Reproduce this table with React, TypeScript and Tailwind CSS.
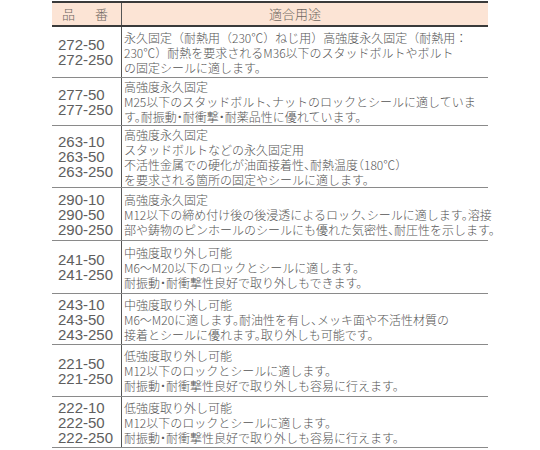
type Row = {
  nums: string[];
  lines: string[];
  h: string;
  fullWidth?: boolean;
};

const rows: Row[] = [
  {
    nums: ['272-50', '272-250'],
    lines: [
      '永久固定（耐熱用（230℃）ねじ用）高強度永久固定（耐熱用：',
      '230℃）耐熱を要求されるM36以下のスタッドボルトやボルト',
      'の固定シールに適します。',
    ],
    h: 'h-[51px]',
    fullWidth: true,
  },
  {
    nums: ['277-50', '277-250'],
    lines: [
      '高強度永久固定',
      'M25以下のスタッドボルト、ナットのロックとシールに適していま',
      'す。耐振動・耐衝撃・耐薬品性に優れています。',
    ],
    h: 'h-[48px]',
  },
  {
    nums: ['263-10', '263-50', '263-250'],
    lines: [
      '高強度永久固定',
      'スタッドボルトなどの永久固定用',
      '不活性金属での硬化が油面接着性、耐熱温度（180℃）',
      'を要求される箇所の固定やシールに適します。',
    ],
    h: 'h-[62px]',
  },
  {
    nums: ['290-10', '290-50', '290-250'],
    lines: [
      '高強度永久固定',
      'M12以下の締め付け後の後浸透によるロック、シールに適します。溶接',
      '部や鋳物のピンホールのシールにも優れた気密性、耐圧性を示します。',
    ],
    h: 'h-[53px]',
  },
  {
    nums: ['241-50', '241-250'],
    lines: [
      '中強度取り外し可能',
      'M6～M20以下のロックとシールに適します。',
      '耐振動・耐衝撃性良好で取り外しもできます。',
    ],
    h: 'h-[53px]',
  },
  {
    nums: ['243-10', '243-50', '243-250'],
    lines: [
      '中強度取り外し可能',
      'M6～M20に適します。耐油性を有し、メッキ面や不活性材質の',
      '接着とシールに優れます。取り外しも可能です。',
    ],
    h: 'h-[51px]',
  },
  {
    nums: ['221-50', '221-250'],
    lines: [
      '低強度取り外し可能',
      'M12以下のロックとシールに適します。',
      '耐振動・耐衝撃性良好で取り外しも容易に行えます。',
    ],
    h: 'h-[52px]',
  },
  {
    nums: ['222-10', '222-50', '222-250'],
    lines: [
      '低強度取り外し可能',
      'M12以下のロックとシールに適します。',
      '耐振動・耐衝撃性良好で取り外しも容易に行えます。',
    ],
    h: 'h-[51px]',
  },
];

const jp = "font-['Noto_Sans_CJK_JP',sans-serif]";

const App = () => {
  return (
    <div className="w-[540px] h-[450px] bg-white pt-[1px] pl-[52px]">
      <div className="w-[436px] border-t-2 border-[#3a3a3a]">
        <div className={`flex h-[24px] bg-[#fce4d5] border-b-2 border-[#3a3a3a] text-[13px] font-light text-[#6e6660] ${jp}`}>
          <div className="w-[70px] border-r border-[#555] flex items-center justify-center gap-[20px] pr-[3px]">
            <span>品</span>
            <span>番</span>
          </div>
          <div className="flex-1 flex items-center justify-center pr-[20px]">適合用途</div>
        </div>
        {rows.map((row, i) => (
          <div key={i} className={`flex border-b border-[#8a8a8a] ${row.h}`}>
            <div className="w-[70px] shrink-0 border-r border-[#555] flex flex-col justify-center pl-[6px] font-['Liberation_Sans',Arial,sans-serif] text-[15px] leading-[15px] text-[#5e5e5e]">
              {row.nums.map((n) => (
                <div key={n}>{n}</div>
              ))}
            </div>
            <div
              className={`flex-1 min-w-0 flex flex-col justify-center pl-[2px] whitespace-nowrap text-[12px] leading-[15px] font-light text-[#555] ${
                row.fullWidth ? '' : '[font-feature-settings:"halt"]'
              } ${jp}`}
            >
              {row.lines.map((l, j) => (
                <div key={j}>{l}</div>
              ))}
            </div>
          </div>
        ))}
      </div>
    </div>
  );
};

export default App;
